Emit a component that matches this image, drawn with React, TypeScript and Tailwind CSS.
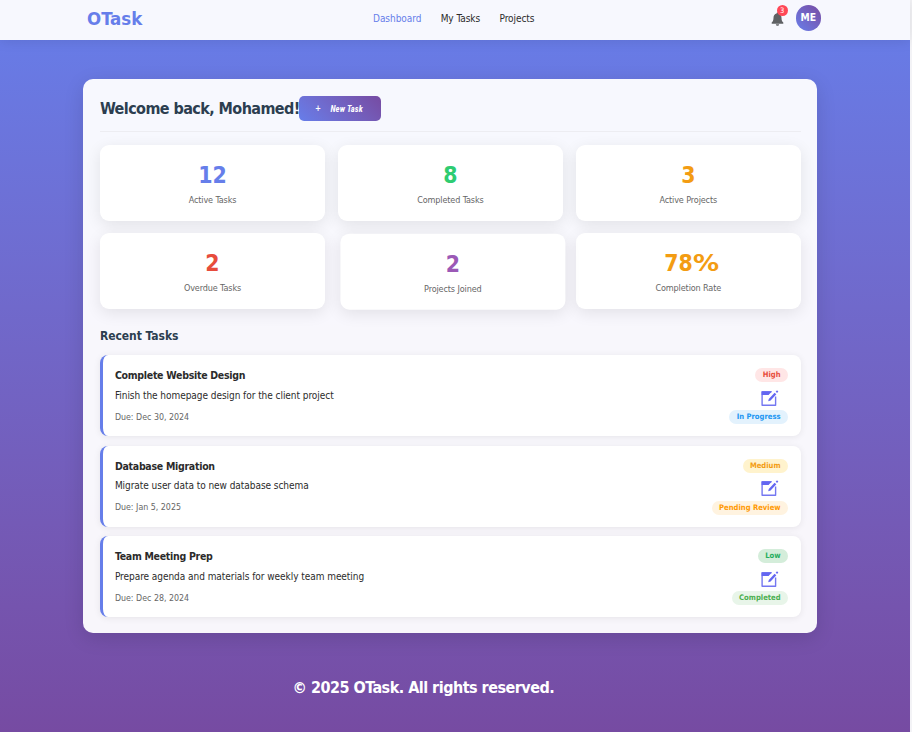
import React from "react";

const stats = [
  { value: "12", label: "Active Tasks", color: "text-[#667eea]", shift: "" },
  { value: "8", label: "Completed Tasks", color: "text-[#2ecc71]", shift: "" },
  { value: "3", label: "Active Projects", color: "text-[#f39c12]", shift: "" },
  { value: "2", label: "Overdue Tasks", color: "text-[#e74c3c]", shift: "" },
  { value: "2", label: "Projects Joined", color: "text-[#9b59b6]", shift: "translate-x-[2.4px] translate-y-[0.7px]" },
  { value: "78", unit: "%", label: "Completion Rate", color: "text-[#f39c12]", shift: "" },
];

const tasks = [
  {
    title: "Complete Website Design",
    text: "Finish the homepage design for the client project",
    due: "Due: Dec 30, 2024",
    priority: "High",
    priorityStyle: "bg-[#ffe6e6] text-[#e74c3c]",
    status: "In Progress",
    statusStyle: "bg-[#e3f2fd] text-[#2196f3]",
  },
  {
    title: "Database Migration",
    text: "Migrate user data to new database schema",
    due: "Due: Jan 5, 2025",
    priority: "Medium",
    priorityStyle: "bg-[#fff3cd] text-[#f39c12]",
    status: "Pending Review",
    statusStyle: "bg-[#fff3e0] text-[#ff9800]",
  },
  {
    title: "Team Meeting Prep",
    text: "Prepare agenda and materials for weekly team meeting",
    due: "Due: Dec 28, 2024",
    priority: "Low",
    priorityStyle: "bg-[#d4edda] text-[#27ae60]",
    status: "Completed",
    statusStyle: "bg-[#e8f5e9] text-[#4caf50]",
  },
];

function BellIcon() {
  return (
    <svg width="13" height="14" viewBox="0 0 13 14" fill="#5f6164">
      <path d="M6.5 0.5C7.1 .5 7.4 1 7.4 1.6C9.4 2.1 10.5 3.8 10.5 5.8C10.5 8.8 11.3 9.6 12.3 10.4V11.8H.7V10.4C1.7 9.6 2.5 8.8 2.5 5.8C2.5 3.8 3.6 2.1 5.6 1.6C5.6 1 5.9 .5 6.5 .5Z" />
      <path d="M4.9 12.2H8.1C8 13.2 7.4 13.7 6.5 13.7S5 13.2 4.9 12.2Z" />
    </svg>
  );
}

function EditIcon() {
  return (
    <svg width="18" height="17" viewBox="0 0 18 17" fill="none">
      <path d="M10.5 1.9H1.1V15.2H14.6V6.5" stroke="#7477f1" strokeWidth="1.4" strokeLinejoin="round" />
      <path d="M.6 1.3H11L7.6 5H.6Z" fill="#6366f1" />
      <path d="M7.2 11.3L7.8 9L13.6 2.7L15.3 4.2L9.6 10.6Z" fill="#6366f1" />
      <path d="M14.7 1.7L16 .3L17.3 1.5L16.1 2.9Z" fill="#6366f1" />
    </svg>
  );
}

function Pill({ className, children }: { className: string; children: React.ReactNode }) {
  return (
    <span className={`flex h-[14px] items-center rounded-full px-[7.3px] text-[7.6px] leading-[14px] font-bold whitespace-nowrap ${className}`}>
      {children}
    </span>
  );
}

export default function App() {
  return (
    <div className="flex h-[732px] w-[912px] overflow-hidden bg-[#f3f3f6] font-['DejaVu_Sans_Condensed','DejaVu_Sans',sans-serif] [font-stretch:condensed]">
      <div className="flex w-[910px] flex-col bg-linear-to-b from-[#667eea] to-[#764ba2]">
        <header className="h-[40.3px] shrink-0 bg-white/95 shadow-[0_1px_12px_rgba(0,0,0,0.1)]">
          <div className="ml-[87px] flex h-[36px] w-[734px] items-center">
            <div className="w-[286px] pt-px text-[18.5px] font-bold whitespace-nowrap text-[#667eea]">OTask</div>
            <nav className="flex flex-1 gap-[19.3px] text-[10px] tracking-[-0.05px] whitespace-nowrap text-[#2b2b2b]">
              <a className="text-[#667eea]">Dashboard</a>
              <a>My Tasks</a>
              <a>Projects</a>
            </nav>
            <div className="flex items-center gap-[12px]">
              <div className="relative mt-[1px]">
                <BellIcon />
                <span className="absolute -top-[7px] left-[6px] flex size-[11.5px] items-center justify-center rounded-full bg-[#ff4757] text-[7.5px] text-white">3</span>
              </div>
              <div className="flex size-[25.5px] items-center justify-center rounded-full bg-linear-45 from-[#667eea] to-[#764ba2] text-[10.3px] font-bold text-white">ME</div>
            </div>
          </div>
        </header>

        <main className="mt-[39.2px] ml-[83.4px] h-[554px] w-[734px] shrink-0 rounded-[10px] bg-white/95 px-[16.5px] pt-[17px] shadow-[0_5px_20px_rgba(0,0,0,0.12)]">
          <div className="flex h-[35.5px] items-start border-b border-[#ededf2]">
            <h1 className="w-[199.5px] text-[16px] leading-[26px] font-bold tracking-[-0.58px] whitespace-nowrap text-[#2c3e50]">Welcome back, Mohamed!</h1>
            <button className="flex h-[25px] w-[81.5px] items-center rounded-[5px] bg-linear-45 from-[#667eea] to-[#764ba2] pl-[15.5px] text-left text-[8px] font-bold whitespace-nowrap text-white">
              <span className="w-[15.5px] shrink-0">+</span>
              <span className="font-['Roboto',sans-serif] text-[8.5px] tracking-[0.15px] italic">New Task</span>
            </button>
          </div>

          <section className="mt-[13px] grid grid-cols-3 gap-x-[12.7px] gap-y-[12.7px]">
            {stats.map((s) => (
              <div key={s.label} className={`flex h-[75.7px] flex-col items-center rounded-[9px] bg-white pt-[15px] shadow-[0_4px_16px_rgba(0,0,0,0.09)] ${s.shift}`}>
                <div className={`text-[22.8px] leading-[31px] font-bold ${s.unit ? "pl-[1px]" : ""} ${s.color}`}>
                  {s.value}
                  {s.unit && <span className="inline-block origin-left scale-x-[1.27]">{s.unit}</span>}
                </div>
                <div className="mt-[2px] text-[9px] leading-[14px] tracking-[-0.12px] whitespace-nowrap text-[#666]">{s.label}</div>
              </div>
            ))}
          </section>

          <h2 className="mt-[17px] h-[29px] text-[12px] leading-[20px] font-bold tracking-[-0.05px] text-[#2c3e50]">Recent Tasks</h2>

          <section className="flex flex-col gap-[9.5px]">
            {tasks.map((t) => (
              <article key={t.title} className="flex h-[81px] justify-between rounded-[8px] border-l-[3px] border-[#667eea] bg-white pr-[13px] pl-[12px] shadow-[0_1px_7px_rgba(0,0,0,0.08)]">
                <div className="whitespace-nowrap">
                  <h3 className="mt-[12px] text-[10.5px] leading-[17px] font-bold tracking-[-0.28px] text-[#2b2b2b]">{t.title}</h3>
                  <p className="mt-[2.6px] text-[10px] leading-[17px] tracking-[-0.05px] text-[#2b2b2b]">{t.text}</p>
                  <p className="mt-[6px] text-[8.8px] leading-[15px] text-[#666]">{t.due}</p>
                </div>
                <div className="flex flex-col items-end pt-[13px]">
                  <Pill className={t.priorityStyle}>{t.priority}</Pill>
                  <div className="mt-[7.5px] mr-[8.5px] h-[20.5px]">
                    <EditIcon />
                  </div>
                  <Pill className={t.statusStyle}>{t.status}</Pill>
                </div>
              </article>
            ))}
          </section>
        </main>

        <footer className="mt-[41.5px] pl-[292.5px] text-[16px] leading-[26px] font-bold tracking-[-0.51px] text-white">© 2025 OTask. All rights reserved.</footer>
      </div>
    </div>
  );
}
